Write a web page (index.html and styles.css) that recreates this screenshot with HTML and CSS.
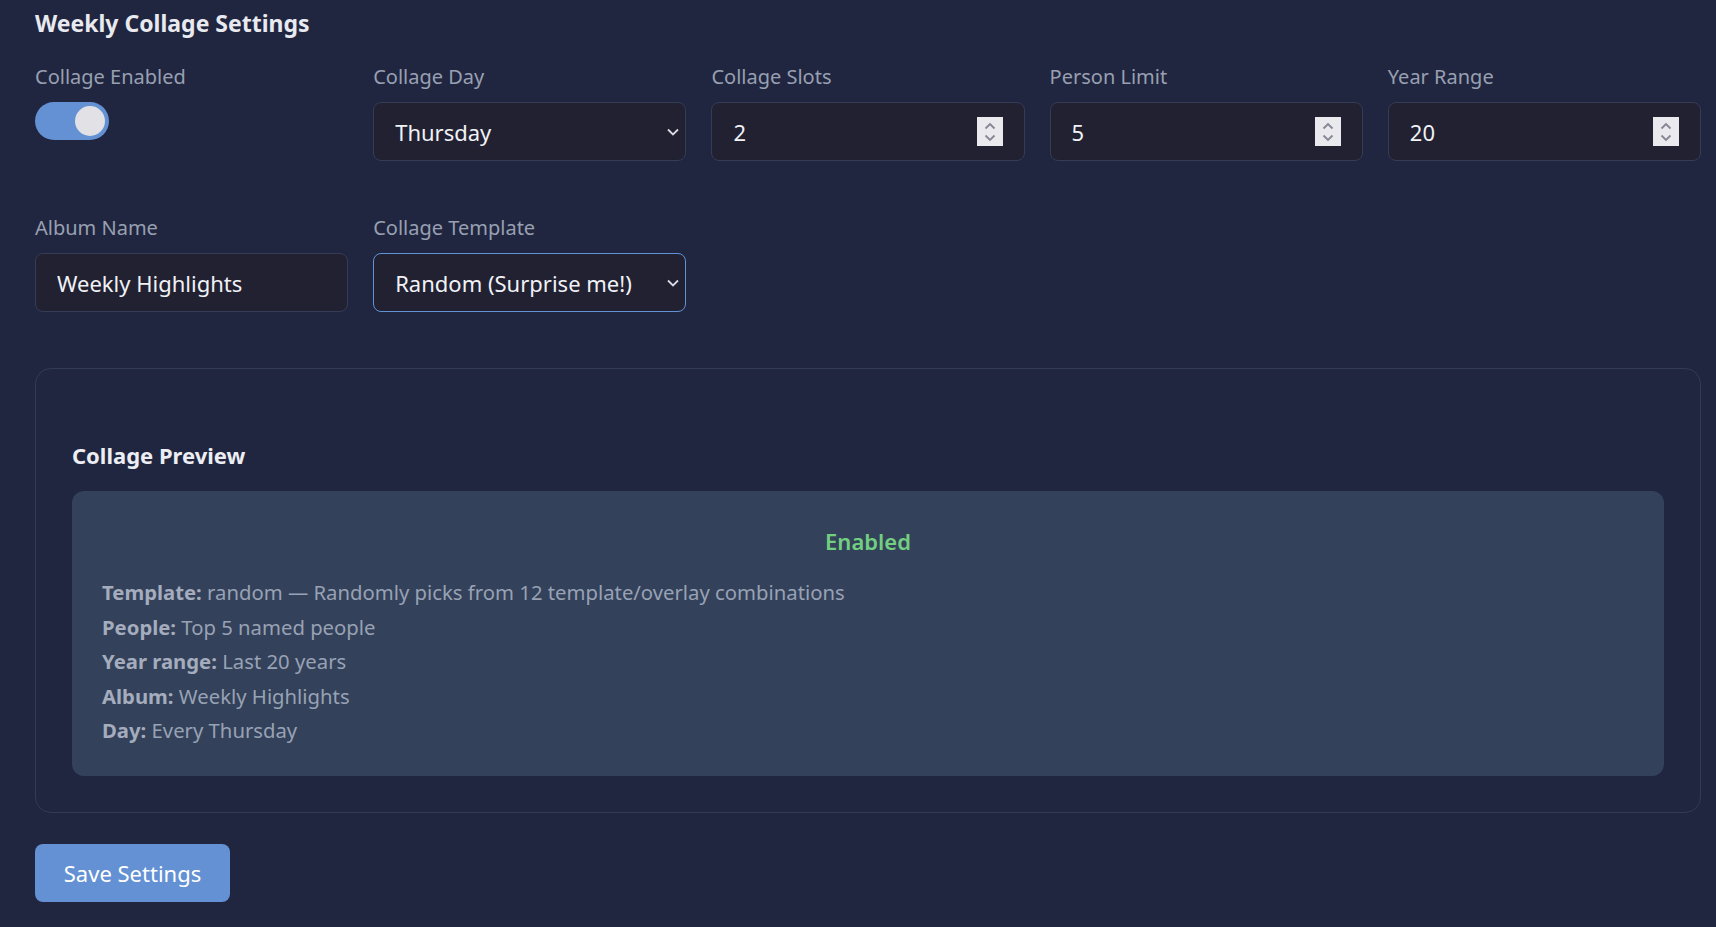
FILE: index.html
```html
<!DOCTYPE html>
<html lang="en">
<head>
<meta charset="utf-8">
<title>Weekly Collage Settings</title>
<link rel="stylesheet" href="styles.css">
</head>
<body>
<main class="page">
  <h2 class="section-title">Weekly Collage Settings</h2>

  <div class="form-grid">
    <div class="field">
      <label class="field-label">Collage Enabled</label>
      <span class="toggle on"><span class="knob"></span></span>
    </div>

    <div class="field">
      <label class="field-label" for="day">Collage Day</label>
      <div class="control select-wrap">
        <select id="day" class="select">
          <option>Monday</option>
          <option>Tuesday</option>
          <option>Wednesday</option>
          <option selected>Thursday</option>
          <option>Friday</option>
          <option>Saturday</option>
          <option>Sunday</option>
        </select>
        <svg class="chevron" viewBox="0 0 12 8" width="12" height="8"><path d="M1 1.5 L6 6.5 L11 1.5" fill="none" stroke="currentColor" stroke-width="1.8"/></svg>
      </div>
    </div>

    <div class="field">
      <label class="field-label" for="slots">Collage Slots</label>
      <div class="control number-wrap">
        <input id="slots" class="number" type="number" value="2">
        <span class="spin"><svg viewBox="0 0 12 24" width="12" height="24"><path d="M1.5 8.5 L6 4 L10.5 8.5 M1.5 15.5 L6 20 L10.5 15.5" fill="none" stroke="currentColor" stroke-width="1.8"/></svg></span>
      </div>
    </div>

    <div class="field">
      <label class="field-label" for="limit">Person Limit</label>
      <div class="control number-wrap">
        <input id="limit" class="number" type="number" value="5">
        <span class="spin"><svg viewBox="0 0 12 24" width="12" height="24"><path d="M1.5 8.5 L6 4 L10.5 8.5 M1.5 15.5 L6 20 L10.5 15.5" fill="none" stroke="currentColor" stroke-width="1.8"/></svg></span>
      </div>
    </div>

    <div class="field">
      <label class="field-label" for="years">Year Range</label>
      <div class="control number-wrap">
        <input id="years" class="number" type="number" value="20">
        <span class="spin"><svg viewBox="0 0 12 24" width="12" height="24"><path d="M1.5 8.5 L6 4 L10.5 8.5 M1.5 15.5 L6 20 L10.5 15.5" fill="none" stroke="currentColor" stroke-width="1.8"/></svg></span>
      </div>
    </div>

    <div class="field">
      <label class="field-label" for="album">Album Name</label>
      <div class="control">
        <input id="album" class="text" type="text" value="Weekly Highlights">
      </div>
    </div>

    <div class="field">
      <label class="field-label" for="template">Collage Template</label>
      <div class="control select-wrap active">
        <select id="template" class="select">
          <option selected>Random (Surprise me!)</option>
          <option>Grid</option>
          <option>Mosaic</option>
        </select>
        <svg class="chevron" viewBox="0 0 12 8" width="12" height="8"><path d="M1 1.5 L6 6.5 L11 1.5" fill="none" stroke="currentColor" stroke-width="1.8"/></svg>
      </div>
    </div>
  </div>

  <section class="preview-card">
    <h3 class="preview-title">Collage Preview</h3>
    <div class="preview-box">
      <div class="status">Enabled</div>
      <ul class="summary">
        <li><strong>Template:</strong> random — Randomly picks from 12 template/overlay combinations</li>
        <li><strong>People:</strong> Top 5 named people</li>
        <li><strong>Year range:</strong> Last 20 years</li>
        <li><strong>Album:</strong> Weekly Highlights</li>
        <li><strong>Day:</strong> Every Thursday</li>
      </ul>
    </div>
  </section>

  <button class="btn-primary" type="button">Save Settings</button>
</main>
</body>
</html>
```

FILE: styles.css
```css
html, body {
  margin: 0;
  padding: 0;
  background: #212640;
}

body {
  font-family: "Noto Sans", "Open Sans", sans-serif;
  color: #e6e8ef;
}

.page {
  width: 1666px;
  padding: 8px 0 24px 35px;
}

.section-title {
  margin: 0;
  font-size: 23px;
  line-height: 30px;
  font-weight: 700;
  color: #e9eaf0;
}

.form-grid {
  display: grid;
  grid-template-columns: repeat(5, minmax(0, 1fr));
  column-gap: 25px;
  row-gap: 53px;
  margin-top: 25px;
}

.field {
  display: flex;
  flex-direction: column;
  align-items: flex-start;
  min-width: 0;
}

.field-label {
  font-size: 20px;
  line-height: 28px;
  color: #98a0b2;
  margin-bottom: 11px;
}

/* toggle switch */
.toggle {
  width: 74px;
  height: 38px;
  border-radius: 19px;
  background: #6391d3;
  display: flex;
  align-items: center;
  justify-content: flex-end;
  padding: 0 4px;
  box-sizing: border-box;
}

.knob {
  width: 30px;
  height: 30px;
  border-radius: 50%;
  background: #e2e2e6;
}

/* shared field frame */
.control {
  width: 100%;
  height: 59px;
  box-sizing: border-box;
  display: flex;
  align-items: center;
  background: #212132;
  border: 1px solid #343c56;
  border-radius: 8px;
}

.control.active {
  border-color: #6192d6;
}

.control input,
.control select {
  flex: 1;
  min-width: 0;
  height: 100%;
  border: 0;
  outline: 0;
  background: transparent;
  color: #f1f2f6;
  font-family: inherit;
  font-size: 22px;
  padding: 0 0 0 21px;
  margin: 0;
}

.control select {
  appearance: none;
  -webkit-appearance: none;
  cursor: pointer;
}

.chevron {
  color: #d9dbe2;
  margin-right: 6px;
  margin-left: 6px;
  flex: none;
}

.number {
  -moz-appearance: textfield;
}

.number::-webkit-inner-spin-button,
.number::-webkit-outer-spin-button {
  -webkit-appearance: none;
  margin: 0;
}

.spin {
  flex: none;
  width: 26px;
  height: 29px;
  margin-right: 21px;
  background: #e9e9ee;
  color: #878794;
  display: flex;
  align-items: center;
  justify-content: center;
}

/* preview */
.preview-card {
  margin-top: 56px;
  border: 1px solid #313b55;
  border-radius: 16px;
  padding: 71px 36px 36px 36px;
}

.preview-title {
  margin: 0 0 21px 0;
  font-size: 22px;
  line-height: 30px;
  font-weight: 700;
  color: #eceef3;
}

.preview-box {
  background: #33415a;
  border-radius: 12px;
  padding: 33px 30px 28px 30px;
}

.status {
  text-align: center;
  color: #72cf80;
  font-size: 22px;
  font-weight: 600;
  line-height: 34px;
  margin-bottom: 17px;
}

.summary {
  list-style: none;
  margin: 0;
  padding: 0;
  font-size: 20.3px;
  line-height: 34.5px;
  color: #98a2b5;
}

.summary strong {
  font-weight: 700;
  color: #a4acbd;
}

.btn-primary {
  margin-top: 31px;
  width: 195px;
  height: 58px;
  border: 0;
  border-radius: 8px;
  background: #6391d3;
  color: #ffffff;
  font-family: inherit;
  font-size: 22px;
  cursor: pointer;
  padding: 0;
}
```
